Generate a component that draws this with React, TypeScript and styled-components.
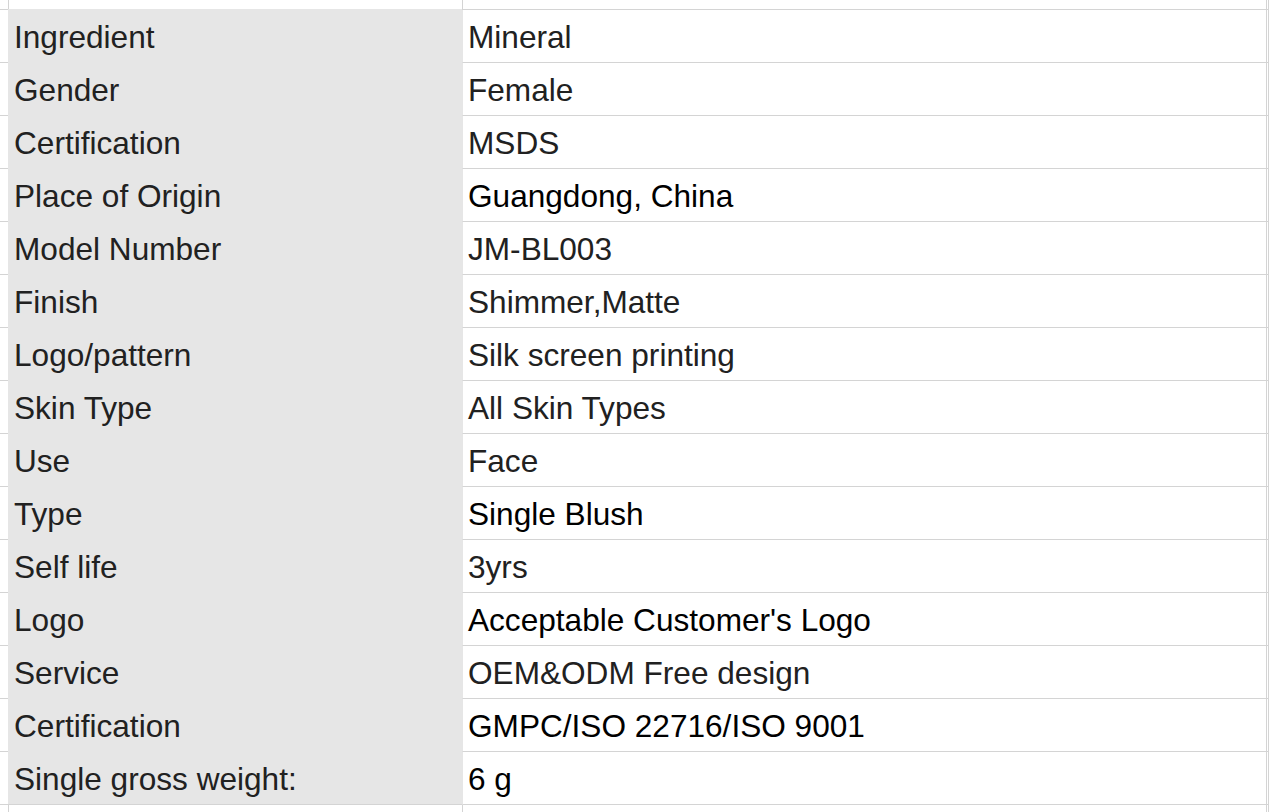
import React from "react";
import styled, { createGlobalStyle } from "styled-components";

const Global = createGlobalStyle`
  html, body { margin: 0; padding: 0; background: #ffffff; }
  body { overflow: hidden; }
`;

const LINE = "#d4d4d4";
const GREY = "#e6e6e6";

const Sheet = styled.div`
  display: grid;
  grid-template-columns: 9px 454px 804px 2px;
  grid-template-rows: 10px repeat(15, 53px) 20px;
  width: 1269px;
  height: 812px;
  overflow: hidden;
  font-family: "Liberation Sans", Arial, sans-serif;
  font-size: 31.6px;
  line-height: 34px;
`;

const Cell = styled.div`
  box-sizing: border-box;
  border-right: 1px solid ${LINE};
  border-bottom: 1px solid ${LINE};
  background: #ffffff;
  min-width: 0;
`;

const LabelCell = styled.div`
  box-sizing: border-box;
  background: ${GREY};
  border-right: 1px solid ${GREY};
  border-bottom: 1px solid ${LINE};
  box-shadow: -1px -1px 0 ${GREY};
  display: flex;
  align-items: flex-end;
  padding: 0 0 8px 5px;
  color: #212121;
  white-space: nowrap;
  overflow: hidden;
`;

const ValueCell = styled(Cell)<{ $strong?: boolean }>`
  display: flex;
  align-items: flex-end;
  padding: 0 0 8px 5px;
  color: ${(p) => (p.$strong ? "#000000" : "#212121")};
  white-space: nowrap;
  overflow: hidden;
`;

const rows: { label: string; value: string; strong?: boolean }[] = [
  { label: "Ingredient", value: "Mineral" },
  { label: "Gender", value: "Female" },
  { label: "Certification", value: "MSDS" },
  { label: "Place of Origin", value: "Guangdong, China", strong: true },
  { label: "Model Number", value: "JM-BL003" },
  { label: "Finish", value: "Shimmer,Matte" },
  { label: "Logo/pattern", value: "Silk screen printing" },
  { label: "Skin Type", value: "All Skin Types" },
  { label: "Use", value: "Face" },
  { label: "Type", value: "Single Blush", strong: true },
  { label: "Self life", value: "3yrs" },
  { label: "Logo", value: "Acceptable Customer's Logo", strong: true },
  { label: "Service", value: "OEM&ODM Free design" },
  { label: "Certification", value: "GMPC/ISO 22716/ISO 9001", strong: true },
  { label: "Single gross weight:", value: "6 g", strong: true },
];

export default function App() {
  return (
    <>
      <Global />
      <Sheet>
        <Cell />
        <Cell />
        <Cell />
        <Cell />
        {rows.map((r, i) => (
          <React.Fragment key={i}>
            <Cell />
            <LabelCell>{r.label}</LabelCell>
            <ValueCell $strong={r.strong}>{r.value}</ValueCell>
            <Cell />
          </React.Fragment>
        ))}
        <Cell />
        <Cell />
        <Cell />
        <Cell />
      </Sheet>
    </>
  );
}
